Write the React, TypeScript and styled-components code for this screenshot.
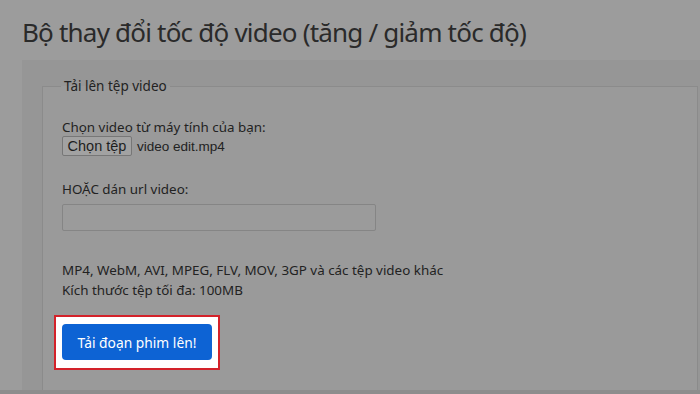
import React from 'react';
import styled, { createGlobalStyle } from 'styled-components';

const GlobalStyle = createGlobalStyle`
  html, body {
    margin: 0;
    padding: 0;
    background: #9c9c9c;
    overflow: hidden;
  }
  body {
    font-family: 'Noto Sans', 'Open Sans', sans-serif;
    color: #222;
  }
`;

const Page = styled.div`
  width: 700px;
  height: 394px;
  display: flex;
  flex-direction: column;
`;

const Title = styled.h1`
  margin: 0;
  padding: 13px 0 0 22px;
  height: 60px;
  box-sizing: border-box;
  font-family: 'Noto Sans', sans-serif;
  font-weight: 400;
  font-size: 26px;
  line-height: 38px;
  color: #2a2a2a;
  letter-spacing: -0.8px;
  white-space: nowrap;
`;

const Panel = styled.div`
  flex: 1;
  margin-left: 22px;
  padding: 17px 2px 0 20px;
  background: #969696;
  display: flex;
  flex-direction: column;
  min-height: 0;
`;

const Fieldset = styled.fieldset`
  flex: 1;
  margin: 0;
  padding: 0 0 0 19px;
  border: 1px solid #8b8b8b;
  border-bottom: none;
  background: #9a9a9a;
  min-width: 0;
`;

const Legend = styled.legend`
  padding: 0 3px;
  margin-left: -1px;
  font-size: 13.5px;
  line-height: 18px;
  color: #222;
`;

const Label = styled.div<{ $top: number }>`
  margin-top: ${(p) => p.$top}px;
  font-size: 13.4px;
  line-height: 18px;
  color: #222;
`;

const FileRow = styled.div`
  display: flex;
  align-items: center;
  gap: 5px;
  height: 20px;
  font-family: 'Liberation Sans', Arial, sans-serif;
  font-size: 13.5px;
  color: #222;
`;

const FileButton = styled.button`
  height: 20px;
  width: 70px;
  box-sizing: border-box;
  padding: 0;
  border: 1px solid #777;
  border-radius: 2px;
  background: #a2a2a2;
  font-family: 'Liberation Sans', Arial, sans-serif;
  font-size: 14.5px;
  color: #1e1e1e;
`;

const UrlInput = styled.input`
  display: block;
  margin-top: 6px;
  width: 314px;
  height: 27px;
  box-sizing: border-box;
  border: 1px solid #858585;
  border-radius: 2px;
  background: #9b9b9b;
`;

const Info = styled.div`
  margin-top: 29px;
  font-size: 13.4px;
  line-height: 20px;
  color: #222;
`;

const Highlight = styled.div`
  margin: 15px 0 0 -8px;
  width: 166px;
  box-sizing: border-box;
  padding: 7px 6px 8px;
  border: 2px solid #d3222a;
  background: #fff;
`;

const UploadButton = styled.button`
  display: block;
  width: 150px;
  height: 36px;
  border: none;
  border-radius: 4px;
  background: #0d63d4;
  color: #fff;
  font-family: 'Noto Sans', sans-serif;
  font-size: 13.8px;
  padding: 0;
`;

const BottomBar = styled.div`
  height: 4px;
  background: #8d8d8d;
`;

const App: React.FC = () => (
  <Page>
    <GlobalStyle />
    <Title>Bộ thay đổi tốc độ video (tăng / giảm tốc độ)</Title>
    <Panel>
      <Fieldset>
        <Legend>Tải lên tệp video</Legend>
        <Label $top={23}>Chọn video từ máy tính của bạn:</Label>
        <FileRow>
          <FileButton>Chọn tệp</FileButton>
          <span>video edit.mp4</span>
        </FileRow>
        <Label $top={24}>HOẶC dán url video:</Label>
        <UrlInput />
        <Info>
          MP4, WebM, AVI, MPEG, FLV, MOV, 3GP và các tệp video khác
          <br />
          Kích thước tệp tối đa: 100MB
        </Info>
        <Highlight>
          <UploadButton>Tải đoạn phim lên!</UploadButton>
        </Highlight>
      </Fieldset>
    </Panel>
    <BottomBar />
  </Page>
);

export default App;
